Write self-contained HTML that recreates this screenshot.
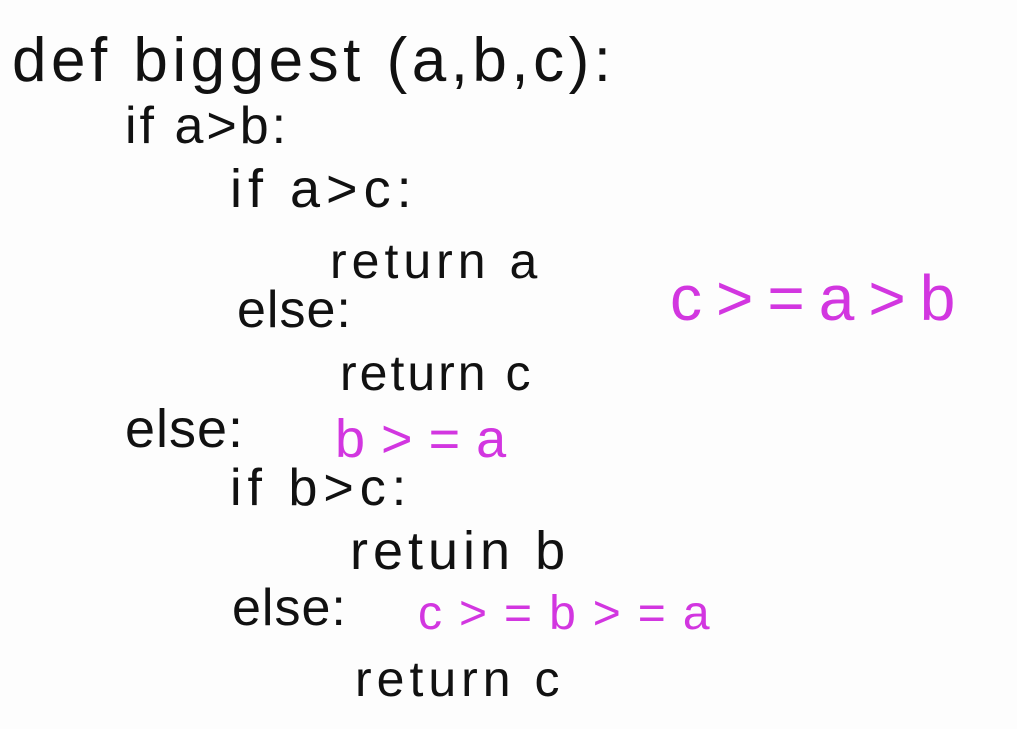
<!DOCTYPE html>
<html><head><meta charset="utf-8"><style>
html,body{margin:0;padding:0;background:#fdfdfd;width:1017px;height:729px;overflow:hidden;}
div{position:absolute;font-family:"Liberation Sans",sans-serif;color:#111;line-height:1;white-space:pre;}
.m{color:#d236e0;}
</style></head><body>
<div style="left:12px;top:30px;font-size:62px;letter-spacing:4.5px">def biggest (a,b,c):</div>
<div style="left:125px;top:100px;font-size:52px;letter-spacing:3px">if a&gt;b:</div>
<div style="left:230px;top:162px;font-size:54px;letter-spacing:6px">if a&gt;c:</div>
<div style="left:330px;top:236px;font-size:50px;letter-spacing:5px">return a</div>
<div style="left:237px;top:284px;font-size:52px;letter-spacing:1px">else:</div>
<div style="left:340px;top:348px;font-size:50px;letter-spacing:3px">return c</div>
<div style="left:125px;top:402px;font-size:54px;letter-spacing:1px">else:</div>
<div class="m" style="left:335px;top:412px;font-size:54px;letter-spacing:16px">b&gt;=a</div>
<div style="left:230px;top:462px;font-size:52px;letter-spacing:6px">if b&gt;c:</div>
<div style="left:350px;top:524px;font-size:54px;letter-spacing:5px">retuin b</div>
<div style="left:232px;top:582px;font-size:52px;letter-spacing:1px">else:</div>
<div class="m" style="left:418px;top:590px;font-size:48px;letter-spacing:17px">c&gt;=b&gt;=a</div>
<div style="left:355px;top:654px;font-size:50px;letter-spacing:5px">return c</div>
<div class="m" style="left:670px;top:266px;font-size:64px;letter-spacing:14px">c&gt;=a&gt;b</div>
</body></html>
